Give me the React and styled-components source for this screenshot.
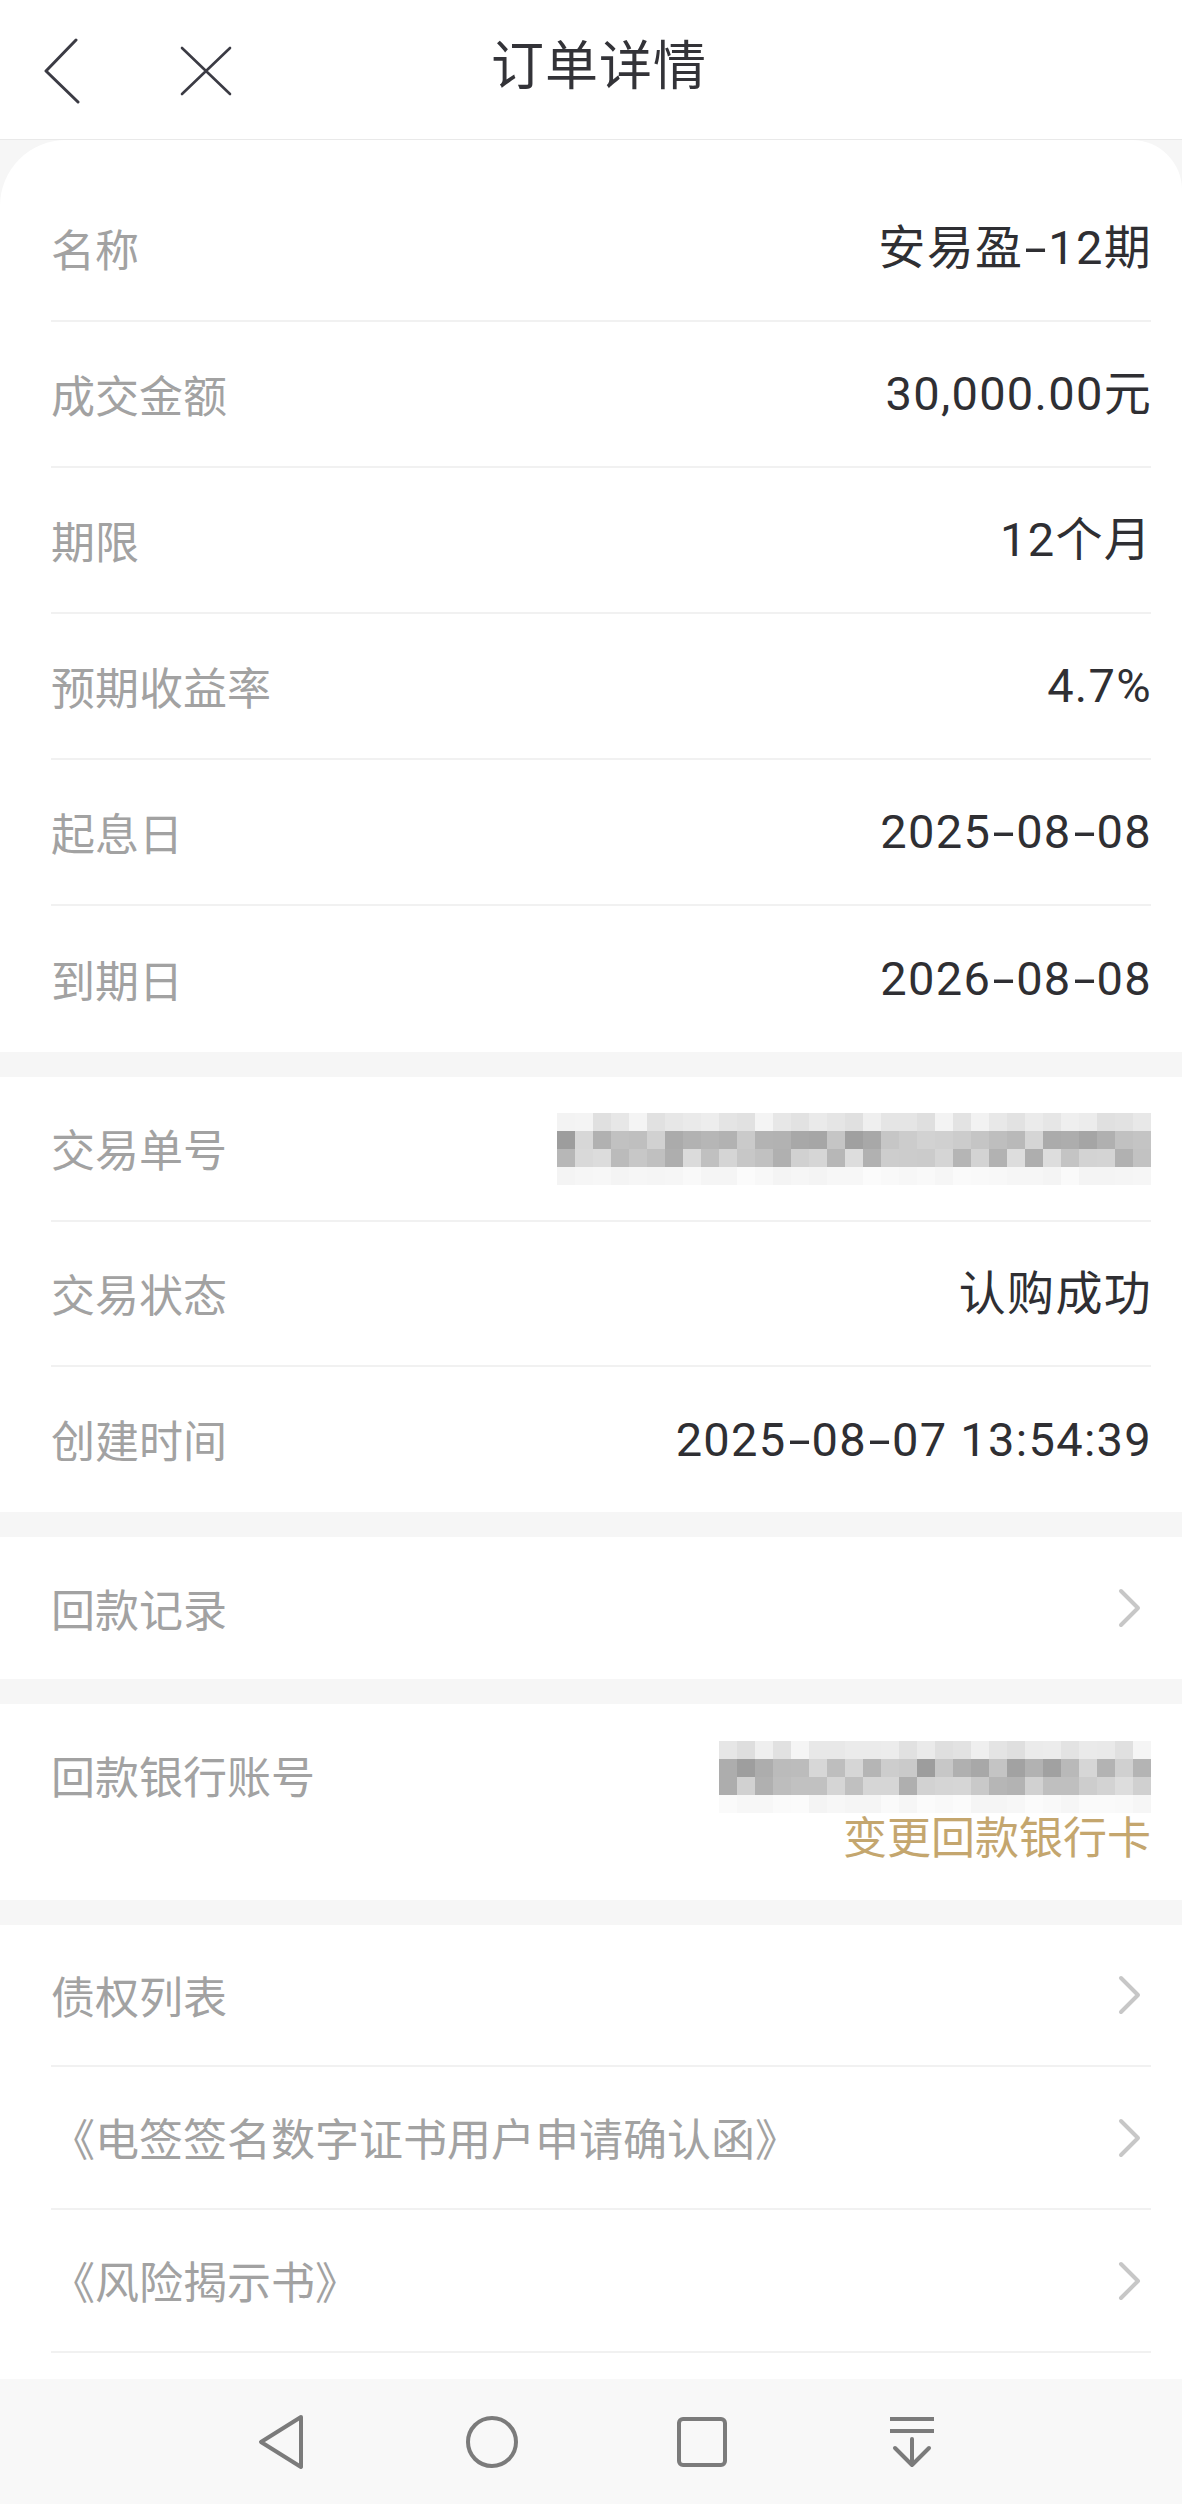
import React from "react";
import styled, { createGlobalStyle } from "styled-components";

const GlobalStyle = createGlobalStyle`
  html, body {
    margin: 0;
    padding: 0;
    background: #f6f6f6;
    font-family: "Noto Sans CJK SC", "Noto Sans", sans-serif;
  }
  * {
    box-sizing: border-box;
  }
`;

const Page = styled.div`
  width: 1182px;
  height: 2504px;
  display: flex;
  flex-direction: column;
  background: #f6f6f6;
  overflow: hidden;
`;

const Header = styled.header`
  flex: none;
  height: 140px;
  background: #ffffff;
  border-bottom: 1px solid #e9e9e9;
  display: grid;
  grid-template-columns: 1fr auto 1fr;
  align-items: center;
`;

const HeaderTools = styled.div`
  display: flex;
  align-items: center;
  gap: 95px;
  padding-left: 43px;
  margin-top: 2px;
`;

const Title = styled.h1`
  margin: 0 0 16px;
  padding-left: 16px;
  font-size: 53px;
  font-weight: 400;
  color: #333338;
  letter-spacing: 1px;
`;

const Content = styled.main`
  flex: 1;
  display: flex;
  flex-direction: column;
  gap: 25px;
  overflow: hidden;
`;

const Card = styled.section`
  flex: ${(p) => (p.$fill ? 1 : "none")};
  background: #ffffff;
  padding: ${(p) => (p.$rounded ? "36px" : "0")} 31px 0 51px;
  border-radius: ${(p) => (p.$rounded ? "66px 50px 0 0" : "0")};
`;

const Row = styled.div`
  height: ${(p) => p.$h || 146}px;
  display: flex;
  align-items: ${(p) => (p.$top ? "flex-start" : "center")};
  justify-content: space-between;
  border-bottom: 2px solid #f1f1f1;

  &:last-child {
    border-bottom: ${(p) => (p.$keepLine ? "2px solid #f1f1f1" : "none")};
  }
`;

const Label = styled.span`
  font-size: 44px;
  line-height: 53px;
  color: #a2a2a2;
  padding-top: ${(p) => p.$pt || 0}px;
  white-space: nowrap;
`;

const ValueText = styled.span`
  font-family: Roboto, "Noto Sans CJK SC", sans-serif;
  font-size: 47px;
  line-height: 56px;
  letter-spacing: 1.3px;
  color: #2f2f33;
  white-space: nowrap;
  margin-right: -1px;
`;

const Hyphen = styled.span`
  display: inline-block;
  width: 25px;
  text-align: center;
  letter-spacing: 0;
  transform: scaleX(1.7);
`;

const ValueStack = styled.div`
  display: flex;
  flex-direction: column;
  align-items: flex-end;
  padding-top: 37px;
`;

const LinkText = styled.span`
  font-size: 44px;
  line-height: 53px;
  color: #c4a66e;
  margin-top: -4px;
`;

const Mosaic = styled.div`
  display: grid;
  grid-template-columns: repeat(${(p) => p.$cols}, 18px);
  grid-auto-rows: 18px;
`;

const Cell = styled.span`
  display: block;
  background: rgb(${(p) => p.$g}, ${(p) => p.$g}, ${(p) => p.$g});
`;

const NavBar = styled.nav`
  flex: none;
  height: 125px;
  background: #f8f8f8;
  display: flex;
  justify-content: center;
  align-items: center;
  padding-left: 12px;
`;

const NavSlot = styled.div`
  width: 210px;
  display: flex;
  justify-content: center;
`;

const BackIcon = () => (
  <svg width="40" height="66" viewBox="0 0 40 66">
    <path d="M33 2 L3 33 L35 64" fill="none" stroke="#3b3b44" strokeWidth="3" strokeLinecap="round" strokeLinejoin="round" />
  </svg>
);

const CloseIcon = () => (
  <svg width="56" height="52" viewBox="0 0 56 52">
    <path d="M4 3 L52 49 M52 3 L4 49" fill="none" stroke="#3b3b44" strokeWidth="2.6" strokeLinecap="round" />
  </svg>
);

const Chevron = () => (
  <svg width="26" height="40" viewBox="0 0 26 40" style={{ marginRight: 8 }}>
    <path d="M4 3 L21 20 L4 37" fill="none" stroke="#c7c7c7" strokeWidth="4" strokeLinecap="round" strokeLinejoin="round" />
  </svg>
);

const NavBack = () => (
  <svg width="50" height="56" viewBox="0 0 50 56">
    <path d="M44 3 L4 28 L44 53 Z" fill="none" stroke="#7b7b7b" strokeWidth="4" strokeLinejoin="round" />
  </svg>
);

const NavHome = () => (
  <svg width="54" height="54" viewBox="0 0 54 54">
    <circle cx="27" cy="27" r="24" fill="none" stroke="#7b7b7b" strokeWidth="4" />
  </svg>
);

const NavRecent = () => (
  <svg width="52" height="52" viewBox="0 0 52 52">
    <rect x="3" y="3" width="46" height="46" rx="4" fill="none" stroke="#7b7b7b" strokeWidth="4" />
  </svg>
);

const NavDrop = () => (
  <svg width="50" height="54" viewBox="0 0 50 54">
    <path d="M3 4 H47 M3 16 H47" stroke="#7b7b7b" strokeWidth="4" />
    <path d="M25 24 V50 M8 33 L25 50 L42 33" fill="none" stroke="#7b7b7b" strokeWidth="4" strokeLinecap="round" strokeLinejoin="round" />
  </svg>
);

// the app font draws a wider dash than Roboto, so hyphens get stretched
const Value = ({ children }) => {
  const parts = String(children).split("-");
  return (
    <ValueText>
      {parts.map((p, i) => (
        <React.Fragment key={i}>
          {i > 0 && <Hyphen>-</Hyphen>}
          {p}
        </React.Fragment>
      ))}
    </ValueText>
  );
};

// blurred numbers, drawn as a gray pixel grid
const makeShades = (cols, seed, bands) => {
  let s = seed;
  const rand = () => {
    s = (s * 9301 + 49297) % 233280;
    return s / 233280;
  };
  const out = [];
  bands.forEach(([lo, hi]) => {
    for (let c = 0; c < cols; c++) {
      out.push(Math.round(lo + rand() * (hi - lo)));
    }
  });
  return out;
};

const BlurredNumber = ({ cols, seed }) => {
  const shades = makeShades(cols, seed, [
    [222, 246],
    [155, 215],
    [172, 222],
    [244, 251],
  ]);
  return (
    <Mosaic $cols={cols}>
      {shades.map((g, i) => (
        <Cell key={i} $g={g} />
      ))}
    </Mosaic>
  );
};

const baseInfo = [
  ["名称", "安易盈-12期"],
  ["成交金额", "30,000.00元"],
  ["期限", "12个月"],
  ["预期收益率", "4.7%"],
  ["起息日", "2025-08-08"],
  ["到期日", "2026-08-08"],
];

const docs = ["债权列表", "《电签签名数字证书用户申请确认函》", "《风险揭示书》"];

const App = () => {
  return (
    <Page>
      <GlobalStyle />
      <Header>
        <HeaderTools>
          <BackIcon />
          <CloseIcon />
        </HeaderTools>
        <Title>订单详情</Title>
        <div />
      </Header>

      <Content>
        <Card $rounded>
          {baseInfo.map(([k, v]) => (
            <Row key={k}>
              <Label>{k}</Label>
              <Value>{v}</Value>
            </Row>
          ))}
        </Card>

        <Card>
          <Row $h={145}>
            <Label>交易单号</Label>
            <BlurredNumber cols={33} seed={17} />
          </Row>
          <Row $h={145}>
            <Label>交易状态</Label>
            <Value>认购成功</Value>
          </Row>
          <Row $h={145}>
            <Label>创建时间</Label>
            <Value>2025-08-07 13:54:39</Value>
          </Row>
        </Card>

        <Card>
          <Row $h={142}>
            <Label>回款记录</Label>
            <Chevron />
          </Row>
        </Card>

        <Card>
          <Row $h={196} $top>
            <Label $pt={45}>回款银行账号</Label>
            <ValueStack>
              <BlurredNumber cols={24} seed={53} />
              <LinkText>变更回款银行卡</LinkText>
            </ValueStack>
          </Row>
        </Card>

        <Card $fill>
          {docs.map((d, i) => (
            <Row key={d} $h={i === 0 ? 142 : 143} $keepLine>
              <Label>{d}</Label>
              <Chevron />
            </Row>
          ))}
        </Card>
      </Content>

      <NavBar>
        <NavSlot>
          <NavBack />
        </NavSlot>
        <NavSlot>
          <NavHome />
        </NavSlot>
        <NavSlot>
          <NavRecent />
        </NavSlot>
        <NavSlot>
          <NavDrop />
        </NavSlot>
      </NavBar>
    </Page>
  );
};

export default App;
